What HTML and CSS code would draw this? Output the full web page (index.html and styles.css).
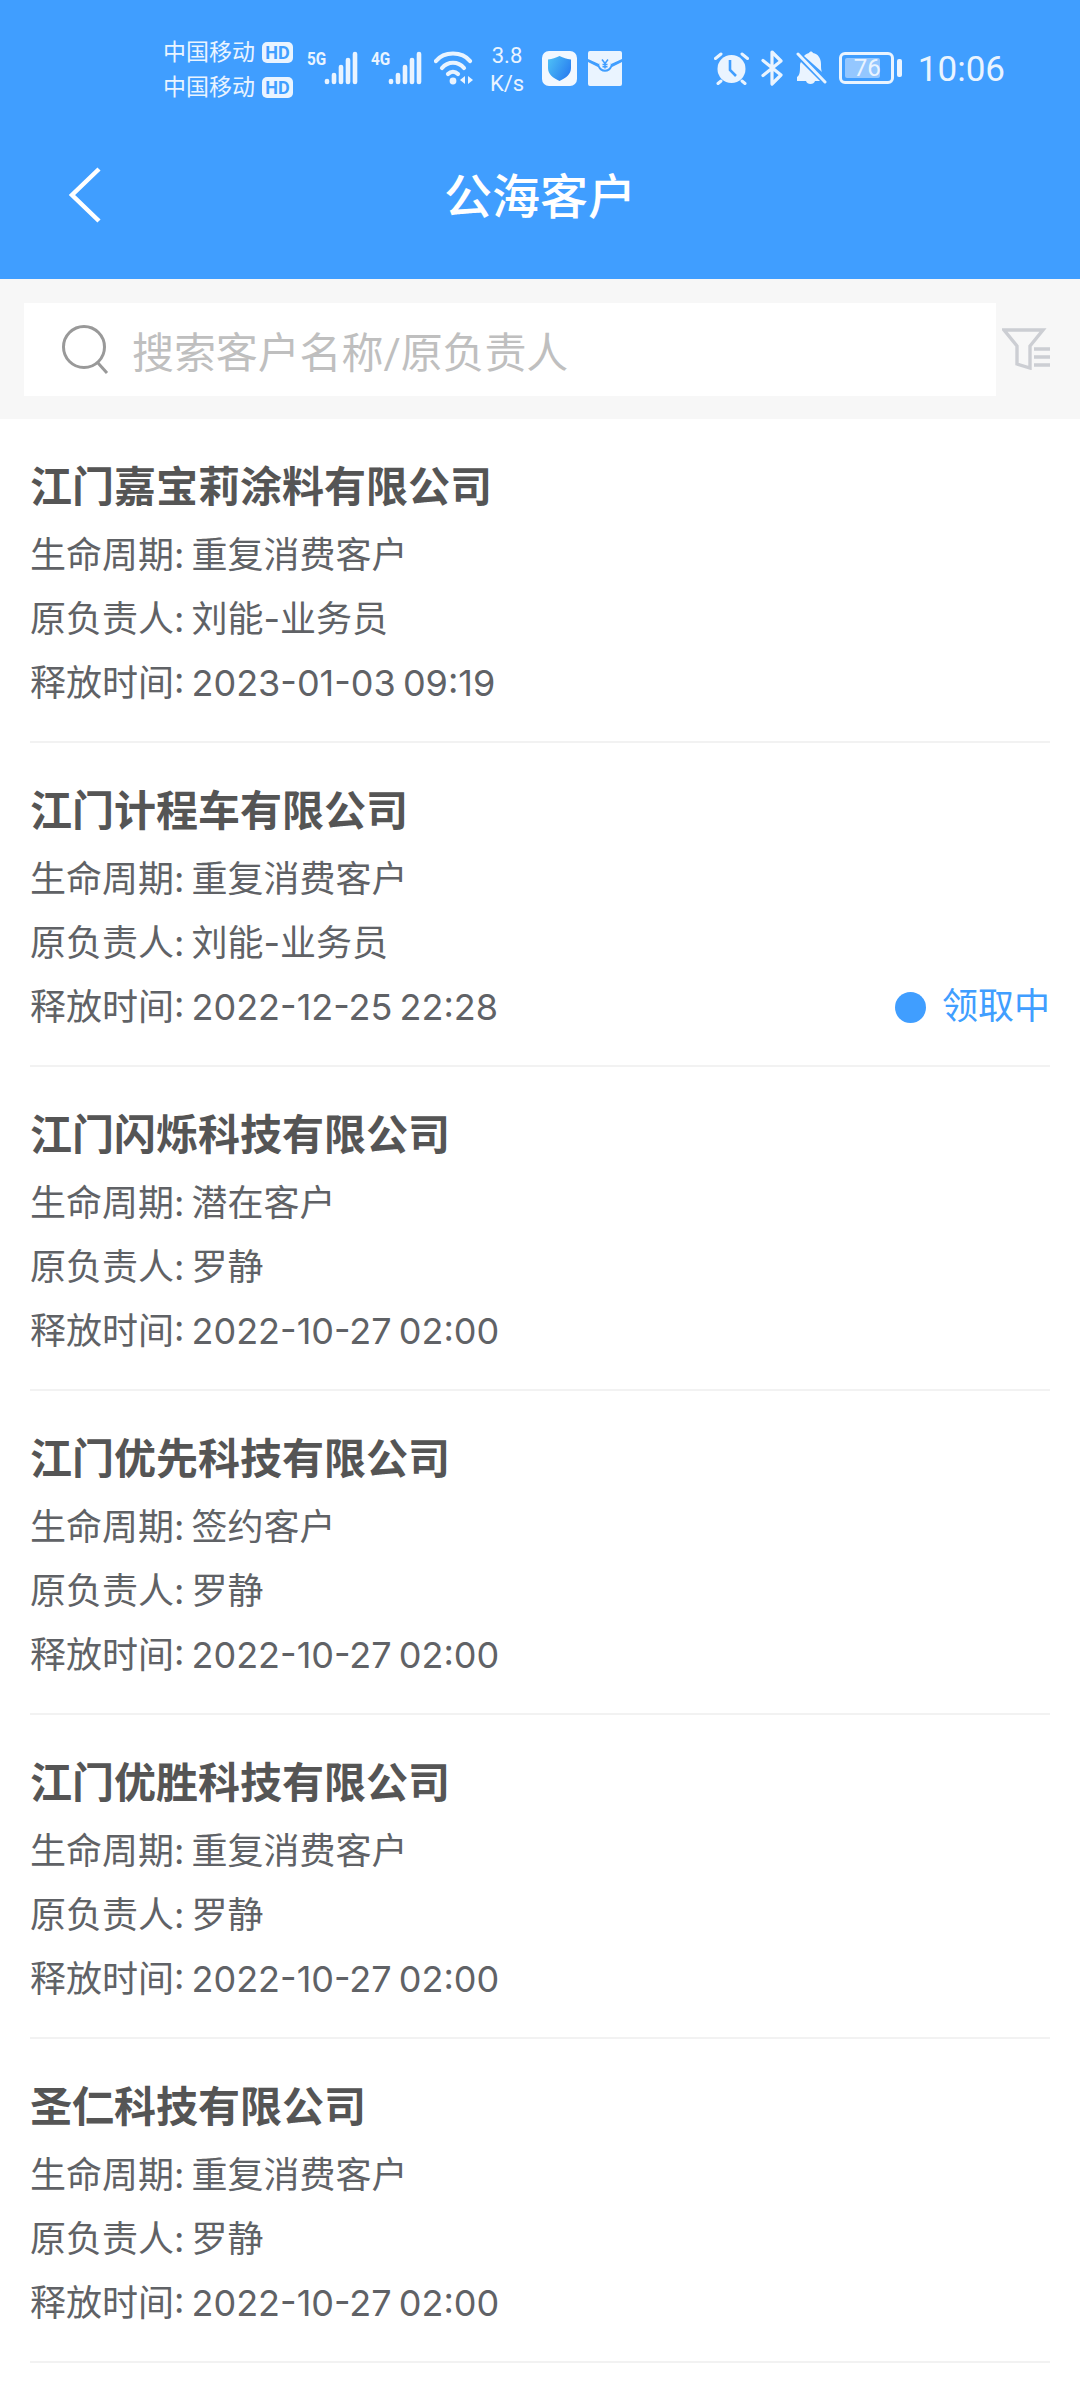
FILE: index.html
```html
<!DOCTYPE html>
<html lang="zh-CN">
<head>
    <meta charset="UTF-8">
    <meta name="viewport" content="width=device-width, initial-scale=1.0">
    <title>公海客户</title>
    <link rel="stylesheet" href="styles.css">
</head>
<body>
    <div class="header">
        <div class="statusbar">
            <div class="carriers">
                <div class="carrier">中国移动<span class="hd">HD</span></div>
                <div class="carrier">中国移动<span class="hd">HD</span></div>
            </div>
            <div class="signal">
                <span class="net">5G</span>
                <svg width="34" height="34" viewBox="0 0 34 34"><g fill="none" stroke="#eaf4ff" stroke-width="4.6" stroke-linecap="round"><path d="M3 30v1"/><path d="M10 24v7"/><path d="M17 16v15"/><path d="M24 9v22"/><path d="M31 3v28"/></g></svg>
            </div>
            <div class="signal signal-second">
                <span class="net">4G</span>
                <svg width="34" height="34" viewBox="0 0 34 34"><g fill="none" stroke="#eaf4ff" stroke-width="4.6" stroke-linecap="round"><path d="M3 30v1"/><path d="M10 24v7"/><path d="M17 16v15"/><path d="M24 9v22"/><path d="M31 3v28"/></g></svg>
            </div>
            <svg class="wifi" width="40" height="34" viewBox="0 0 40 34"><g fill="none" stroke="#eaf4ff" stroke-width="4.2" stroke-linecap="round"><path d="M2 10C10 0 28 0 36 10"/><path d="M8 17C14 10 24 10 30 17"/><path d="M14 23C17 20 21 20 24 23"/></g><circle cx="19" cy="30" r="3.400" fill="#eaf4ff"/><path d="M31 25v8l-5-4zM34 25v8l5-4z" fill="#eaf4ff"/></svg>
            <div class="speed"><span>3.8</span><span>K/s</span></div>
            <svg class="shield-icon" width="35" height="35" viewBox="0 0 35 35"><defs><linearGradient id="shield" x1="0" y1="0" x2="1" y2="0.600"><stop offset="0" stop-color="#4fc3f7"/><stop offset="1" stop-color="#2a80f0"/></linearGradient></defs><rect width="35" height="35" rx="7" fill="#f2f8ff"/><path d="M17.500 5c4 2 7 3 11.500 3.500V17c0 6-5 10-11.500 13C11 27 6 23 6 17V8.500C10.500 8 13.500 7 17.500 5z" fill="url(#shield)"/></svg>
            <svg class="packet-icon" width="34" height="35" viewBox="0 0 34 35"><path d="M2 0h30a2 2 0 0 1 2 2v6L23 13a7 7 0 0 0-12 0L0 8V2a2 2 0 0 1 2-2z" fill="#eaf4ff"/><path d="M0 11l10 5a7.500 7.500 0 0 0 14 0l10-5v22a2 2 0 0 1-2 2H2a2 2 0 0 1-2-2z" fill="#eaf4ff"/><circle cx="17" cy="13" r="5.800" fill="#eaf4ff"/><path d="M14 8.500l3 4 3-4M17 12.500v5M14.500 13.500h5M14.500 15.800h5" fill="none" stroke="#409eff" stroke-width="1.500"/></svg>
            <div class="status-right">
                <svg width="35" height="33" viewBox="0 0 35 33"><circle cx="17.500" cy="17" r="14" fill="#eaf4ff"/><path d="M16 8v10l6 6" fill="none" stroke="#409eff" stroke-width="2.600"/><path d="M1.500 6.500L7 2M33.500 6.500L28 2M4 31.500l3-2.500M31 31.500L28 29" fill="none" stroke="#eaf4ff" stroke-width="3" stroke-linecap="round"/></svg>
                <svg width="22" height="36" viewBox="0 0 22 36"><path d="M2 10.500L20 25 11 34V2l9 9L2 25.500" fill="none" stroke="#eaf4ff" stroke-width="3.200" stroke-linejoin="round" stroke-linecap="round"/></svg>
                <svg width="32" height="34" viewBox="0 0 32 34"><path d="M2 26c3-2 3-6 3-11 0-1 0-3 1-4l19 19H2zM9 5c2-2 3-2.500 5-3 1-2 3-2 4 0 5 1 8 5 8 11 0 4 0 6 1 8z" fill="#eaf4ff"/><path d="M11 30h9c-1 4-8 4-9 0z" fill="#eaf4ff"/><path d="M3 3l27 28" stroke="#eaf4ff" stroke-width="3" stroke-linecap="round"/></svg>
                <div class="battery">
                    <div class="battery-body"><div class="battery-fill"></div><span class="battery-num">76</span></div>
                    <div class="battery-tip"></div>
                </div>
                <span class="time">10:06</span>
            </div>
        </div>
        <div class="navbar">
            <svg class="back" width="34" height="56" viewBox="0 0 34 56"><path d="M31 2L4 28l27 26" fill="none" stroke="#fff" stroke-width="4.500"/></svg>
            <h1 class="page-title">公海客户</h1>
        </div>
    </div>

    <div class="search">
        <div class="search-box">
            <svg width="48" height="54" viewBox="0 0 48 54"><circle cx="22" cy="24" r="20.500" fill="none" stroke="#999" stroke-width="3"/><path d="M36 40l9 10" stroke="#999" stroke-width="3"/></svg>
            <span class="placeholder">搜索客户名称/原负责人</span>
        </div>
        <svg class="filter" width="50" height="42" viewBox="0 0 50 42"><path d="M2 2h39L28 18v22l-13-4V18z" fill="none" stroke="#ccced3" stroke-width="3.400"/><path d="M32 21h16M32 29h16M32 37h16" stroke="#ccced3" stroke-width="3.400"/></svg>
    </div>

    <div class="list">
        <div class="item">
            <h2 class="name">江门嘉宝莉涂料有限公司</h2>
            <p>生命周期: 重复消费客户</p>
            <p>原负责人: 刘能-业务员</p>
            <p>释放时间: 2023-01-03 09:19</p>
        </div>
        <div class="item">
            <h2 class="name">江门计程车有限公司</h2>
            <p>生命周期: 重复消费客户</p>
            <p>原负责人: 刘能-业务员</p>
            <div class="item-last">
                <p>释放时间: 2022-12-25 22:28</p>
                <div class="state"><i class="dot"></i>领取中</div>
            </div>
        </div>
        <div class="item">
            <h2 class="name">江门闪烁科技有限公司</h2>
            <p>生命周期: 潜在客户</p>
            <p>原负责人: 罗静</p>
            <p>释放时间: 2022-10-27 02:00</p>
        </div>
        <div class="item">
            <h2 class="name">江门优先科技有限公司</h2>
            <p>生命周期: 签约客户</p>
            <p>原负责人: 罗静</p>
            <p>释放时间: 2022-10-27 02:00</p>
        </div>
        <div class="item">
            <h2 class="name">江门优胜科技有限公司</h2>
            <p>生命周期: 重复消费客户</p>
            <p>原负责人: 罗静</p>
            <p>释放时间: 2022-10-27 02:00</p>
        </div>
        <div class="item">
            <h2 class="name">圣仁科技有限公司</h2>
            <p>生命周期: 重复消费客户</p>
            <p>原负责人: 罗静</p>
            <p>释放时间: 2022-10-27 02:00</p>
        </div>
    </div>
</body>
</html>
```

FILE: styles.css
```css
* {
    margin: 0;
    padding: 0;
    box-sizing: border-box;
    font-family: Roboto, "Noto Sans CJK SC", sans-serif;
}

body {
    background: #fff;
    width: 1080px;
    height: 2400px;
    overflow: hidden;
}

.header {
    background: #409eff;
    height: 279px;
}

.statusbar {
    height: 136px;
    padding: 0 75px 0 163px;
    display: flex;
    align-items: center;
    color: #eaf4ff;
}

.carriers {
    width: 144px;
    margin-top: 3px;
}

.carrier {
    display: flex;
    align-items: center;
    font-size: 23px;
    line-height: 35px;
    height: 35px;
}

.hd {
    background: #eaf4ff;
    color: #409eff;
    border-radius: 5px;
    font-size: 18px;
    font-weight: 700;
    line-height: 21px;
    height: 21px;
    width: 31px;
    text-align: center;
    margin-left: 7px;
}

.signal {
    display: flex;
    align-items: flex-start;
    width: 64px;
}

.signal-second {
    width: 52px;
}

.net {
    font-size: 18px;
    font-weight: 700;
    line-height: 16px;
    width: 17px;
    transform: scaleX(0.85);
    transform-origin: left;
}

.wifi {
    margin-left: 11px;
}

.speed {
    display: flex;
    flex-direction: column;
    align-items: center;
    width: 40px;
    margin-left: 13px;
    margin-top: 3px;
    font-size: 22px;
    line-height: 28px;
}

.shield-icon {
    margin-left: 15px;
}

.packet-icon {
    margin-left: 11px;
}

.status-right {
    display: flex;
    align-items: center;
    margin-left: auto;
    gap: 12px;
}

.battery {
    display: flex;
    align-items: center;
}

.battery-body {
    position: relative;
    width: 55px;
    height: 32px;
    border: 3px solid #eaf4ff;
    border-radius: 6px;
}

.battery-fill {
    position: absolute;
    left: 3px;
    top: 3px;
    bottom: 3px;
    width: 35px;
    background: #94c7ff;
    border-radius: 2px;
}

.battery-num {
    position: absolute;
    left: 12px;
    top: 0;
    font-size: 24px;
    line-height: 26px;
}

.battery-tip {
    width: 5px;
    height: 18px;
    margin-left: 3px;
    background: #eaf4ff;
    border-radius: 2px;
}

.time {
    font-size: 35px;
    margin-left: 4px;
    margin-top: 3px;
}

.navbar {
    position: relative;
    height: 143px;
    padding: 31px 0 0 68px;
}

.page-title {
    position: absolute;
    left: 0;
    right: 0;
    top: 29px;
    text-align: center;
    color: #fff;
    font-size: 48px;
    font-weight: 500;
    line-height: 66px;
}

.search {
    height: 140px;
    background: #f7f7f7;
    padding: 24px 0 0 24px;
    display: flex;
    align-items: flex-start;
}

.search-box {
    width: 972px;
    height: 93px;
    background: #fff;
    display: flex;
    align-items: center;
    padding-left: 38px;
}

.placeholder {
    color: #bfbfbf;
    font-size: 42px;
    margin-left: 22px;
    letter-spacing: -0.1px;
}

.filter {
    margin-top: 25px;
    margin-left: 6px;
}

.list {
    padding: 0 30px;
}

.item {
    height: 324px;
    padding-top: 33px;
    border-bottom: 2px solid #f2f2f2;
    color: #606266;
}

.name {
    font-size: 42px;
    font-weight: 700;
    line-height: 71px;
    color: #555;
}

.item p {
    font-family: Inter, "Noto Sans CJK SC", sans-serif;
    font-size: 36px;
    line-height: 64px;
    word-spacing: -3px;
}

.item-last {
    display: flex;
    justify-content: space-between;
    align-items: center;
}

.state {
    display: flex;
    align-items: center;
    color: #409eff;
    font-size: 36px;
    line-height: 64px;
}

.dot {
    width: 31px;
    height: 31px;
    border-radius: 50%;
    background: #409eff;
    margin-right: 16px;
}
```
